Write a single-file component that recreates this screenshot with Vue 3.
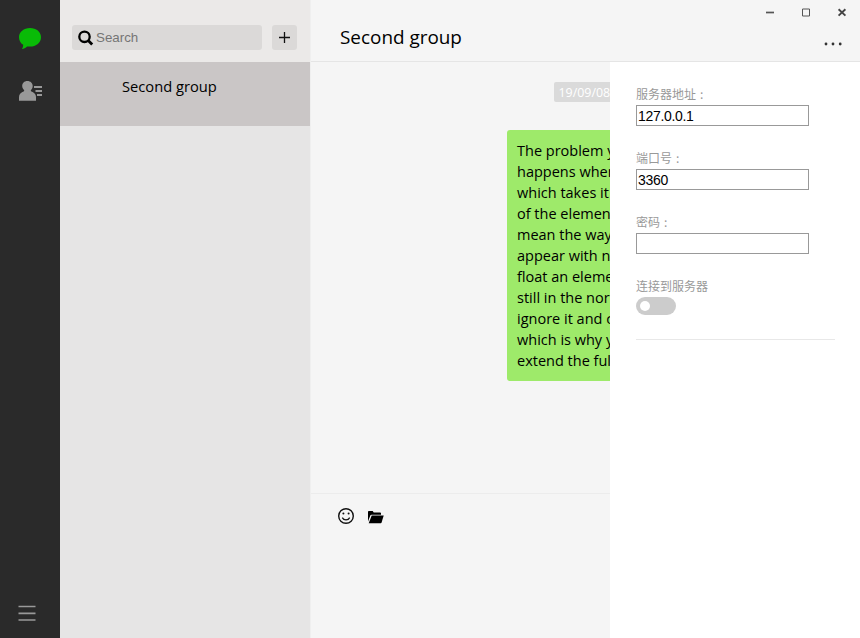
<script setup>
import { ref } from 'vue'

const search = ref('')
const connected = ref(false)
const fields = ref([
  { label: '服务器地址', value: '127.0.0.1' },
  { label: '端口号', value: '3360' },
  { label: '密码', value: '' },
])
const lines = [
  'The problem y',
  'happens when',
  'which takes it',
  'of the elemen',
  'mean the way',
  'appear with n',
  'float an eleme',
  'still in the nor',
  'ignore it and c',
  'which is why y',
  'extend the full',
]
</script>

<template>
  <div class="app">
    <nav class="rail">
      <svg class="chat-icon" width="24" height="24" viewBox="0 0 24 24">
        <path d="M12 1C5.800 1 1 5 1 10.200c0 3.200 1.500 5.900 4.200 7.600-.1 1.700-.3 2.900-1.300 4.200 2-.2 3.700-1.100 5.200-2.600l2.900.2c6.200 0 11-4.100 11-9.400S18.200 1 12 1z" fill="#09bb07" />
      </svg>
      <svg class="contact-icon" width="25" height="22" viewBox="0 0 25 22">
        <path d="M9.300 1C6.200 1 4.200 3.200 4.200 6c0 1.700.8 3.200 2 4.200l-.2 1C3 12.200 1 14.200 1 17v3.700h17V17c0-2.800-2-4.800-5-5.800l-.2-1c1.300-1 1.900-2.500 1.900-4.200 0-2.800-2.100-5-5.400-5z" fill="#999" />
        <path d="M16 7h8M17.500 11H24M19 15h5" stroke="#999" stroke-width="1.800" />
      </svg>
      <svg class="menu-icon" width="18" height="18" viewBox="0 0 18 18">
        <path d="M.5 2.500h17M.5 9.300h17M.5 16h17" stroke="#999" stroke-width="1.700" />
      </svg>
    </nav>

    <aside class="sidebar">
      <div class="tools">
        <label class="search">
          <svg width="16" height="16" viewBox="0 0 16 16" fill="none" stroke="#000">
            <circle cx="6.500" cy="6.800" r="5.200" stroke-width="2.300" />
            <path d="M10.200 10.600l4 4" stroke-width="2.800" />
          </svg>
          <input v-model="search" placeholder="Search" />
        </label>
        <button class="add">
          <svg width="11" height="11" viewBox="0 0 11 11"><path d="M5.500 0v11M0 5.500h11" stroke="#111" stroke-width="1.300" /></svg>
        </button>
      </div>
      <div class="group"><span class="group-name">Second group</span></div>
    </aside>

    <main class="chat">
      <header class="head">
        <h1>Second group</h1>
        <div class="controls">
          <div class="window">
            <svg width="12" height="12" viewBox="0 0 12 12"><path d="M2 6.500h8" stroke="#555" stroke-width="1.700" /></svg>
            <svg width="12" height="12" viewBox="0 0 12 12"><path d="M2.500 3h7v7h-7z" fill="none" stroke="#555" /></svg>
            <svg width="12" height="12" viewBox="0 0 12 12"><path d="M2.600 3.200l6.800 6.400M9.400 3.200L2.600 9.600" stroke="#444" stroke-width="1.900" /></svg>
          </div>
          <svg class="more" width="18" height="4" viewBox="0 0 18 4" fill="#333">
            <circle cx="2" cy="2" r="1.400" /><circle cx="9" cy="2" r="1.400" /><circle cx="16.200" cy="2" r="1.400" />
          </svg>
        </div>
      </header>
      <section class="messages">
        <time>19/09/08</time>
        <div class="bubble"><div v-for="line in lines" :key="line">{{ line }}</div></div>
      </section>
      <footer class="composer">
        <svg width="18" height="18" viewBox="0 0 18 18" fill="none" stroke="#111">
          <circle cx="9" cy="9" r="7.300" stroke-width="1.400" />
          <path d="M5.300 10.600c1.500 2.900 5.900 2.900 7.400 0" stroke-width="1.200" />
          <circle cx="6.400" cy="6.500" r="1" fill="#111" stroke="none" />
          <circle cx="11.600" cy="6.500" r="1" fill="#111" stroke="none" />
        </svg>
        <svg width="17" height="14" viewBox="0 0 17 14" fill="#000">
          <path d="M1 11.500V1.800c0-.6.300-.9.900-.9h3.800l1 1.500h6.400c.6 0 .9.300.9.900v1.500H4.500c-.6 0-1 .3-1.200.8z" />
          <path d="M4.700 5.500h12L14.600 12.600c-.2.500-.4.700-.9.700H1.700z" />
        </svg>
      </footer>
    </main>

    <aside class="drawer">
      <label v-for="field in fields" :key="field.label" class="field">
        <span class="label">{{ field.label }}<span class="colon">:</span></span>
        <input v-model="field.value" />
      </label>
      <div class="connect">
        <span class="label">连接到服务器</span>
        <button class="switch" :class="{ on: connected }" @click="connected = !connected"><i></i></button>
      </div>
    </aside>
  </div>
</template>

<style>
body { margin: 0; overflow: hidden; }
</style>

<style scoped>
* { box-sizing: border-box; }
svg { display: block; flex: none; }
button { border: 0; padding: 0; }
.app { position: relative; display: flex; width: 860px; height: 638px; overflow: hidden; background: #f5f5f5; color: #000; font-family: "Open Sans", "Noto Sans", "Noto Sans CJK SC", sans-serif; }
.rail { width: 60px; background: #2a2a2a; display: flex; flex-direction: column; padding: 27px 0 16px 18px; }
.contact-icon { margin-top: 29px; }
.menu-icon { margin-top: auto; }
.sidebar { width: 250px; background: #e6e5e5; }
.tools { height: 62px; background: #ebe9e8; padding: 25px 13px 0 12px; display: flex; justify-content: space-between; }
.search { width: 190px; height: 25px; background: #dbd9d8; border-radius: 3px; display: flex; align-items: center; padding-left: 6px; gap: 2px; }
.search input { width: 150px; border: 0; padding: 0; outline: 0; background: transparent; font: 13.333px "Liberation Sans", sans-serif; }
.search input::placeholder { color: #757575; }
.add { width: 25px; height: 25px; border-radius: 3px; background: #dbd9d8; display: grid; place-items: center; }
.group { height: 64px; background: #cac6c6; padding: 13px 0 0 62px; }
.group-name { display: block; font-size: 14.700px; line-height: 22px; white-space: nowrap; }
.chat { width: 550px; display: flex; flex-direction: column; border-left: 1px solid #efefef; }
.head { height: 62px; border-bottom: 1px solid #e5e5e5; display: flex; justify-content: space-between; padding-left: 29px; }
h1 { margin: 22px 0 0; font-size: 18.900px; line-height: 30px; font-weight: 400; white-space: nowrap; }
.controls { display: flex; flex-direction: column; align-items: flex-end; padding: 6px 12px 0 0; }
.window { display: flex; gap: 24px; }
.more { margin: 24px 6px 0 0; }
.messages { height: 431px; padding-top: 20px; display: flex; flex-direction: column; align-items: center; }
time { height: 20px; width: 63px; padding-left: 5px; margin-right: 1px; background: #dadada; color: #fff; border-radius: 2px; font-size: 12.400px; line-height: 21px; white-space: nowrap; }
.bubble { align-self: flex-end; width: 283px; height: 251px; margin: 28px 70px 0 0; padding: 10px; border-radius: 3px; background: #9eea6a; font-size: 14.500px; line-height: 21px; white-space: nowrap; }
.composer { flex: 1; border-top: 1px solid #ececec; padding: 13px 0 0 26px; display: flex; gap: 12px; }
.composer svg:last-child { margin-top: 3px; }
.drawer { position: absolute; top: 62px; right: 0; bottom: 0; width: 250px; background: #fff; padding: 23px 25px 0 26px; }
.label { display: block; height: 20px; color: #999; font: 12px/18px "Noto Sans CJK SC", sans-serif; }
.colon { margin-left: 4px; }
.field { display: block; height: 64px; }
.field input { display: block; width: 173px; height: 21px; padding: 0 1px; border: 1px solid #999; border-radius: 0; outline: 0; background: #fff; color: #000; font: 14px "Liberation Sans", sans-serif; letter-spacing: -.32px; }
.connect { height: 63px; border-bottom: 1px solid #e8e8e8; }
.switch { display: flex; align-items: center; width: 40px; height: 18px; padding-left: 4px; border-radius: 9px; background: #ccc; }
.switch i { width: 10px; height: 10px; border-radius: 50%; background: #fff; }
.switch.on { background: #09bb07; justify-content: flex-end; padding: 0 4px 0 0; }
</style>
